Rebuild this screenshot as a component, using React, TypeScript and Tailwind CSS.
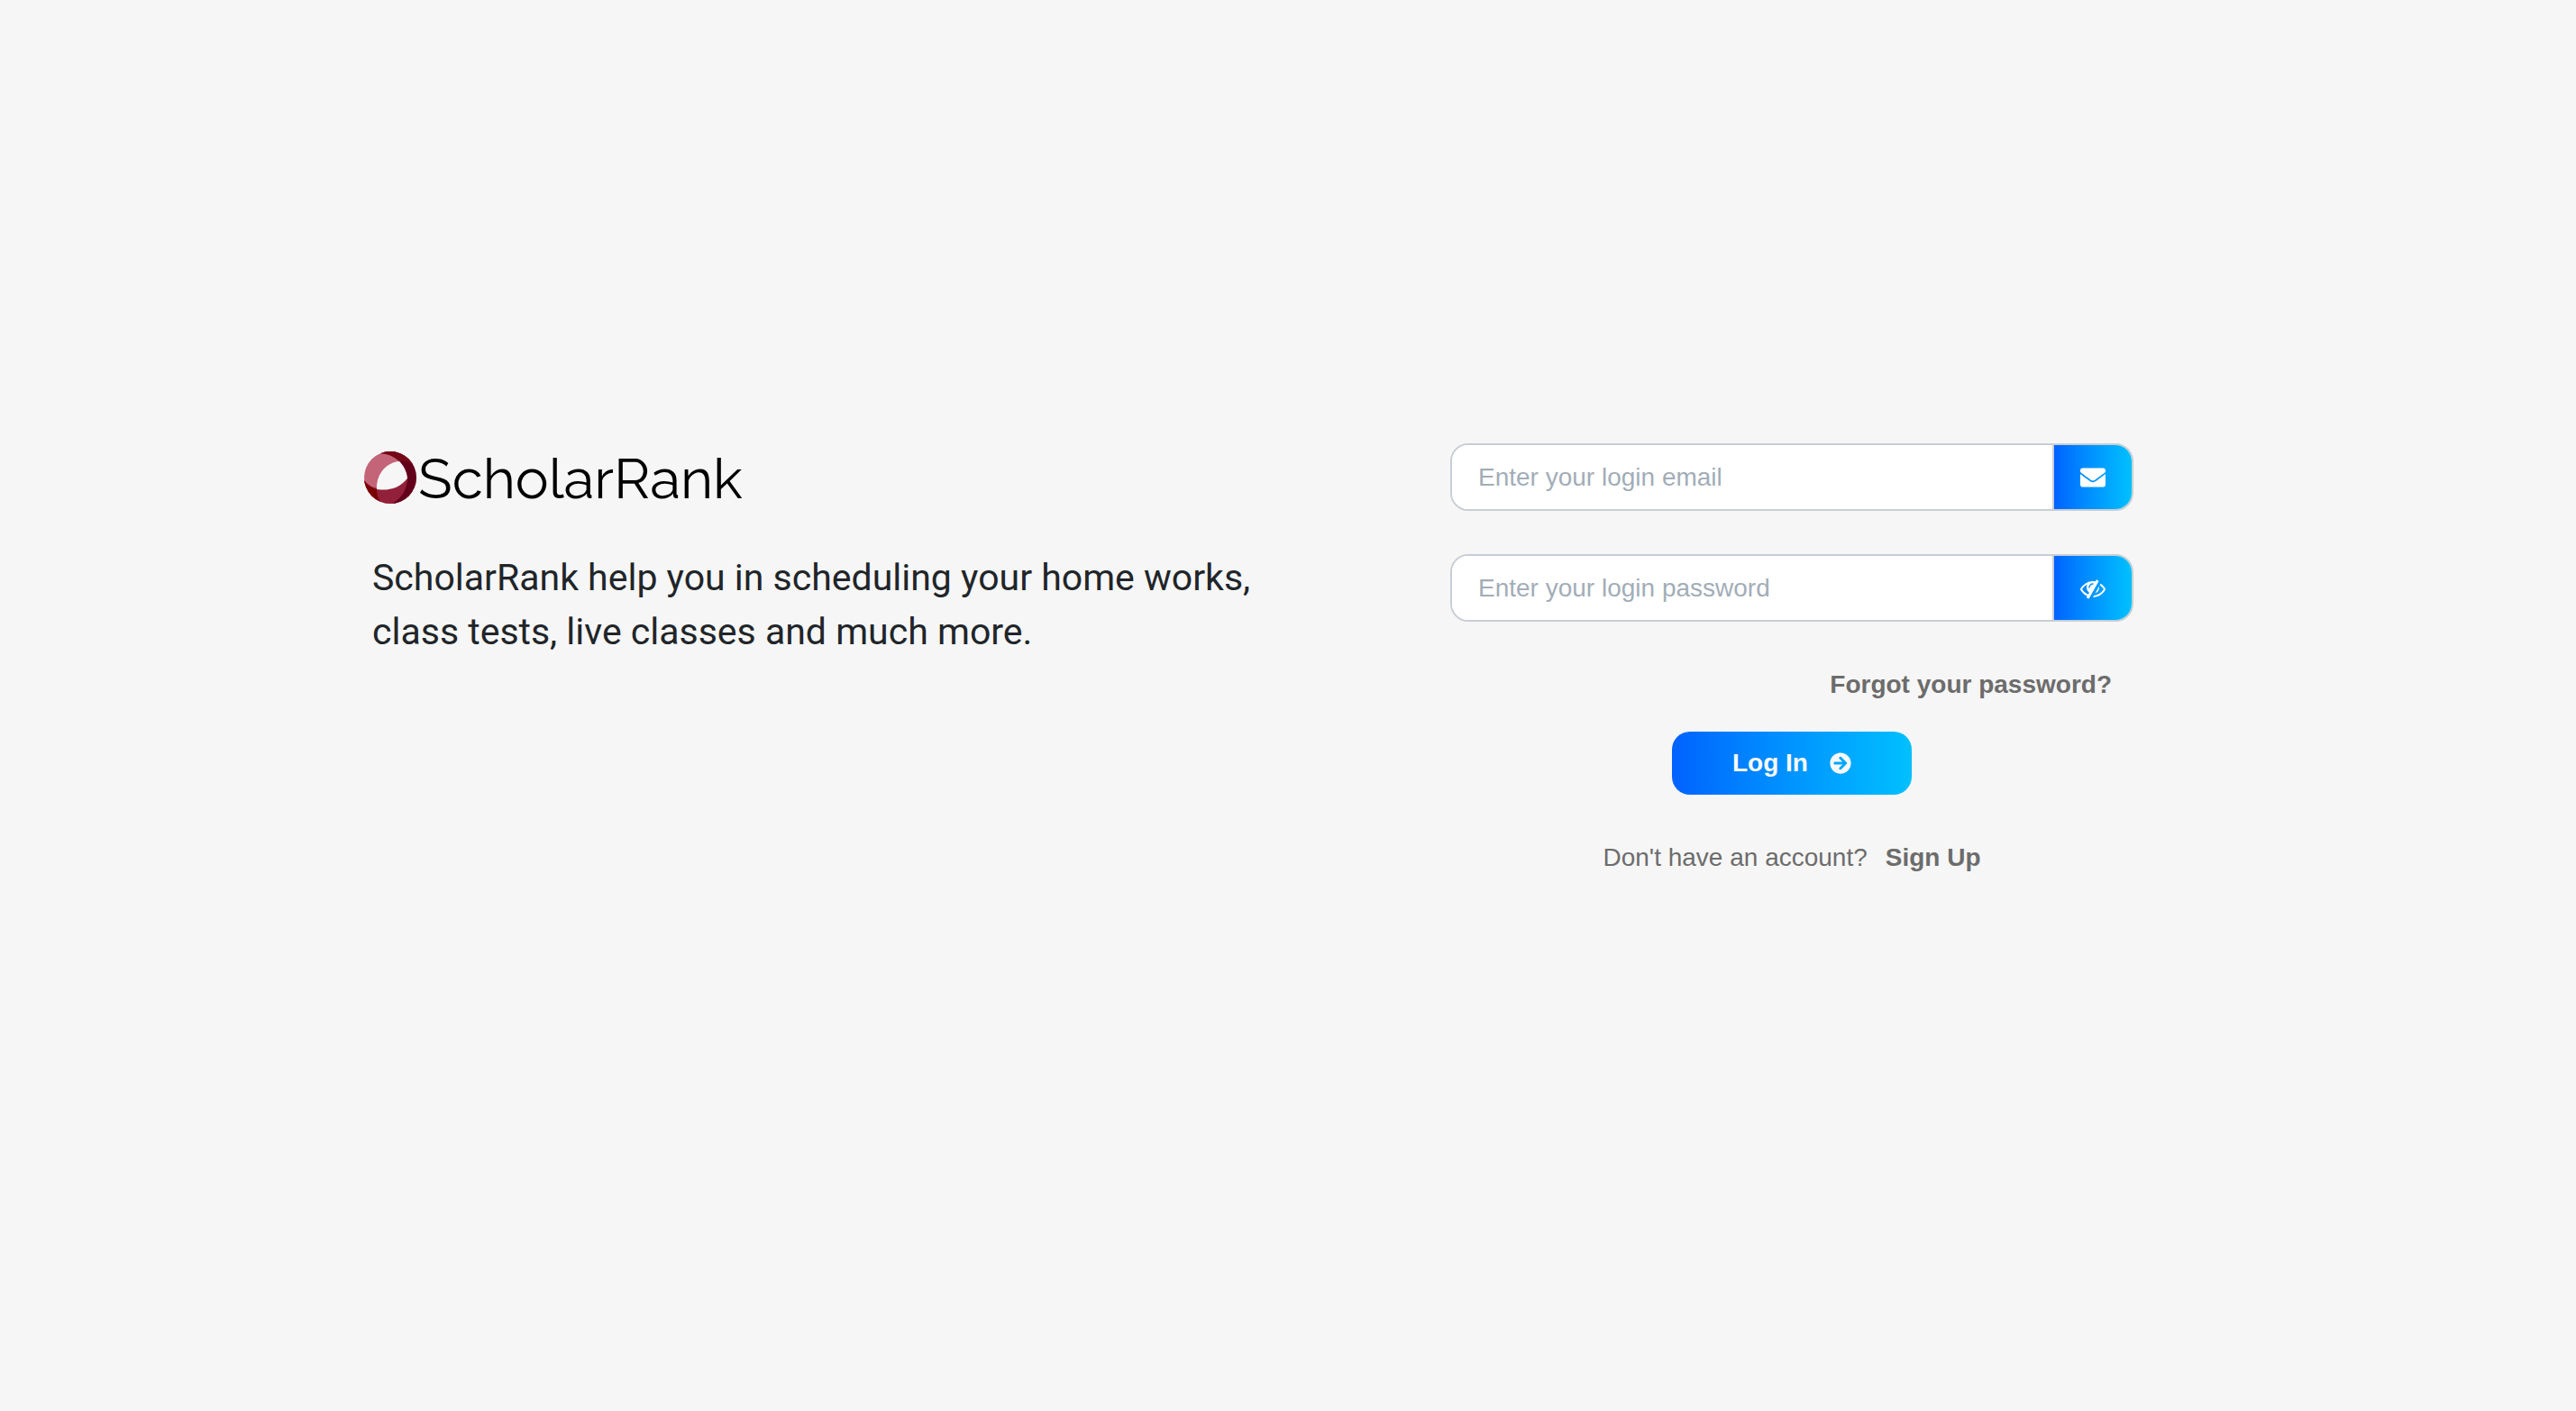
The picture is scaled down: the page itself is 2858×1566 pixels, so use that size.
import { useState } from "react";
import type { ReactNode } from "react";
import { FaEnvelope, FaArrowCircleRight } from "react-icons/fa";

function LogoMark() {
  return (
    <svg viewBox="0 0 58 58" className="size-[58px] shrink-0" aria-hidden="true">
      <defs>
        <clipPath id="disc">
          <circle cx="29" cy="29" r="29" />
        </clipPath>
      </defs>
      <g clipPath="url(#disc)">
        <rect width="58" height="58" fill="#c46478" />
        <path d="M0 32 C10 45 32 46 48 28 L58 58 L0 58 Z" fill="#92203a" />
        <path d="M0 32 C4 38 9 41 14 42 C14 49 16 54 20 58 L0 58 Z" fill="#7a0000" />
        <path d="M16 2 C34 2 46 14 48 30 C48 41 42 52 31 58 L58 58 L58 0 L16 0 Z" fill="#62001b" />
        <path d="M16 2 C26 2 34 6 39 11 C44 10 49 11 53 14 L50 0 L16 0 Z" fill="#740818" />
        <path d="M39 11 C44 16 47 22 48 30 C39 41 27 44 14 42 C13 25 25 12 39 11 Z" fill="#f6f6f6" />
      </g>
    </svg>
  );
}

function EyeSlash() {
  return (
    <svg viewBox="0 0 1792 1792" className="size-7" fill="currentColor" aria-hidden="true">
      <path d="M555 1335l78-141q-87-63-136-159t-49-203q0-121 61-225-229 117-381 353 167 258 427 375zM944 576q0-20-14-34t-34-14q-125 0-214.500 89.500t-89.500 214.500q0 20 14 34t34 14 34-14 14-34q0-86 61-147t147-61q20 0 34-14t14-34zm363-191q0 7-1 9-106 189-316 567t-315 566l-49 89q-10 16-28 16-12 0-134-70-16-10-16-28 0-12 44-87-143-65-263.500-173t-208.500-245q-20-31-20-69t20-69q153-235 380-371t496-136q89 0 180 17l54-97q10-16 28-16 5 0 18 6t31 15.500 33 18.500 31.500 18.500 19.500 11.500q16 10 16 27zm37 447q0 139-79 253.500t-209 164.500l280-502q8 45 8 84zm448 128q0 35-20 69-39 64-109 145-150 172-347.500 267t-419.500 95l74-132q212-18 392.500-137t301.500-307q-115-179-282-294l63-112q95 64 182.500 153t144.500 184q20 34 20 69z" />
    </svg>
  );
}

type FieldProps = {
  id: string;
  label: string;
  type: string;
  addon: ReactNode;
};

function Field({ id, label, type, addon }: FieldProps) {
  return (
    <div className="flex h-[75px] overflow-hidden rounded-[20px] border-2 border-[#c7ced5] bg-white">
      <input
        id={id}
        type={type}
        aria-label={label}
        placeholder={label}
        className="min-w-0 flex-1 bg-white px-[29px] text-[28px] text-[#495057] outline-none placeholder:text-[#a2adb8]"
      />
      {addon}
    </div>
  );
}

const addonClass =
  "flex w-[88px] shrink-0 items-center justify-center border-l-2 border-[#c7ced5] bg-linear-to-r from-[#0062ff] to-[#00c0ff] text-white";

export default function App() {
  const [visible, setVisible] = useState(false);
  return (
    <main className="grid min-h-screen grid-cols-[minmax(0,1fr)_minmax(0,758px)] content-start gap-x-[180px] bg-[#f6f6f6] pt-[492px] pr-[491px] pl-[404px] font-['Liberation_Sans',Arial,sans-serif] text-[28px] leading-[42px] text-[#6c6c6c]">
      <section>
        <div className="flex h-[76px] items-center gap-0.5">
          <LogoMark />
          <span className="pt-1 font-['Raleway','Lato',sans-serif] text-[62px] leading-[76px] font-normal text-black">ScholarRank</span>
        </div>
        <p className="mt-[43px] pl-[9px] font-['Roboto',sans-serif] text-[41px] leading-[60px] text-[#212529]">
          ScholarRank help you in scheduling your home works,
          <br />
          class tests, live classes and much more.
        </p>
      </section>
      <form className="flex flex-col" onSubmit={(e) => e.preventDefault()}>
        <div className="flex flex-col gap-12">
          <Field
            id="email"
            label="Enter your login email"
            type="email"
            addon={
              <span className={addonClass}>
                <FaEnvelope className="size-7" aria-hidden="true" />
              </span>
            }
          />
          <Field
            id="password"
            label="Enter your login password"
            type={visible ? "text" : "password"}
            addon={
              <button type="button" aria-label="Show password" onClick={() => setVisible(!visible)} className={addonClass}>
                <EyeSlash />
              </button>
            }
          />
        </div>
        <a href="#forgot" className="mt-[49px] mr-6 self-end font-bold">
          Forgot your password?
        </a>
        <button
          type="submit"
          className="mt-[31px] flex h-[70px] w-[266px] items-center justify-center gap-6 self-center rounded-[20px] bg-linear-to-r from-[#0062ff] to-[#00c0ff] font-bold text-[#f8f9fa]"
        >
          Log In
          <FaArrowCircleRight className="size-6" aria-hidden="true" />
        </button>
        <p className="mt-[49px] flex justify-center gap-5">
          Don't have an account?
          <a href="#signup" className="font-bold">
            Sign Up
          </a>
        </p>
      </form>
    </main>
  );
}
